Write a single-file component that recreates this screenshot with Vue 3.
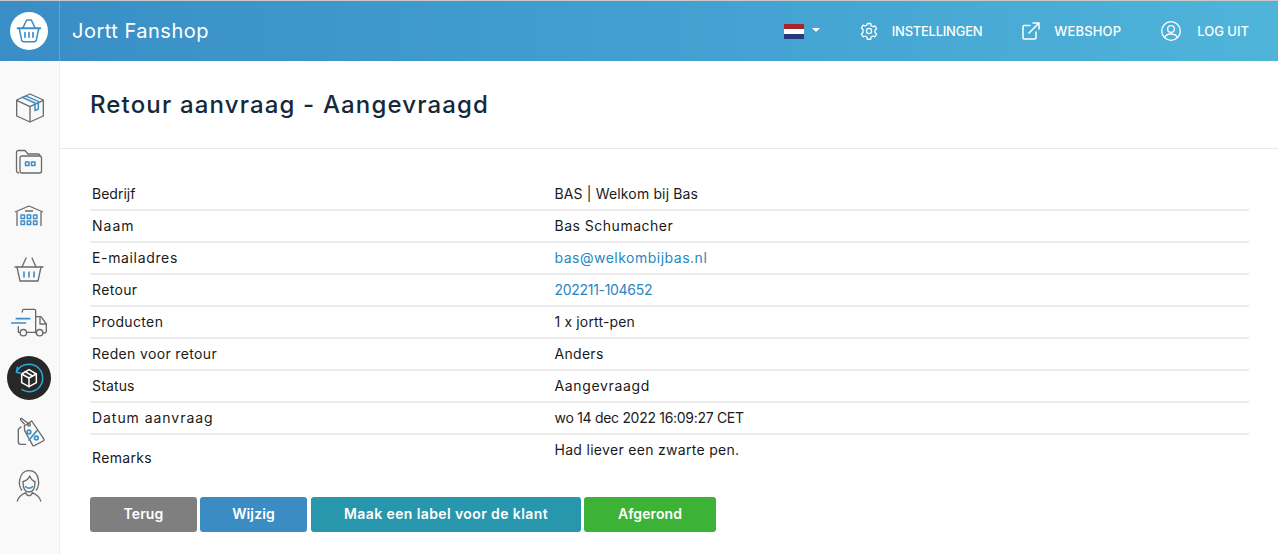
<script setup>
const rows = [
  { label: 'Bedrijf', value: 'BAS | Welkom bij Bas', lc: 'ls-1', vc: 'ls-2' },
  { label: 'Naam', value: 'Bas Schumacher', lc: 'ls-7', vc: 'ls-5' },
  { label: 'E-mailadres', value: 'bas@welkombijbas.nl', lc: 'ls-6', vc: 'ls-5', link: true },
  { label: 'Retour', value: '202211-104652', lc: 'ls-4', vc: 'ls-n', link: true },
  { label: 'Producten', value: '1 x jortt-pen', lc: 'ls-4', vc: 'ls-2' },
  { label: 'Reden voor retour', value: 'Anders', lc: 'ls-4', vc: 'ls-3' },
  { label: 'Status', value: 'Aangevraagd', lc: 'ls-2', vc: 'ls-6' },
  { label: 'Datum aanvraag', value: 'wo 14 dec 2022 16:09:27 CET', lc: 'ls-9', vc: 'ls-n' },
]
</script>

<template>
  <div class="page">
    <header class="topbar">
      <div class="logo-cell">
        <span class="logo">
          <svg width="38" height="38" viewBox="3 3 114 114" fill="none" stroke="#3a8fc6" stroke-width="4.500" stroke-linecap="round" stroke-linejoin="round">
            <path d="M41 52 53 27M79 52 67 27M53 27H67" />
            <path d="M26 52H94" stroke-width="6" />
            <path d="M31 54 38 87C39 91 41 92 44 92H76C79 92 81 91 82 87L89 54" />
            <path d="M48 65V79M60 65V79M72 65V79" stroke-width="5" />
          </svg>
        </span>
      </div>
      <div class="brand">Jortt Fanshop</div>
      <nav class="topnav">
        <div class="lang">
          <svg width="20" height="15" viewBox="0 0 20 15"><rect width="20" height="5" fill="#a8242f" /><rect y="5" width="20" height="5" fill="#fff" /><rect y="10" width="20" height="5" fill="#26387f" /></svg>
          <span class="caret"></span>
        </div>
        <a class="navitem settings">
          <svg width="18" height="18" viewBox="0 0 24 24" fill="none" stroke="#fff" stroke-width="1.700" stroke-linejoin="round"><circle cx="12" cy="12" r="3.400" /><path d="M9.800 2h4.400l.6 3 2.300 1.300 2.900-1 2.200 3.800-2.300 2V13.900l2.300 2-2.200 3.800-2.900-1-2.300 1.300-.6 3H9.800l-.6-3-2.300-1.300-2.900 1-2.200-3.800 2.300-2V10.100l-2.300-2 2.200-3.800 2.900 1 2.300-1.300z" /></svg>
          <span>INSTELLINGEN</span>
        </a>
        <a class="navitem webshop">
          <svg width="18" height="18" viewBox="0 0 18 18" fill="none" stroke="#fff" stroke-width="1.500" stroke-linecap="round" stroke-linejoin="round"><path d="M8 3.500H2.200c-.7 0-1.200.5-1.200 1.200v11.100c0 .7.5 1.200 1.200 1.200h10.600c.7 0 1.200-.5 1.200-1.200V10" /><path d="M7 11 17 1M11 1h6v6" /></svg>
          <span>WEBSHOP</span>
        </a>
        <a class="navitem logout">
          <svg width="20" height="20" viewBox="0 0 20 20" fill="none" stroke="#fff" stroke-width="1.300"><circle cx="10" cy="10" r="9.300" /><circle cx="10" cy="8" r="3.400" /><path d="M3.800 16.600C4.600 13.900 7 13 10 13s5.400.9 6.200 3.600" /></svg>
          <span>LOG UIT</span>
        </a>
      </nav>
    </header>

    <div class="body">
      <aside class="sidebar">
        <div class="side-item">
          <svg width="40" height="40" viewBox="0 0 120 120" fill="none" stroke="#6a6a6a" stroke-width="4" stroke-linejoin="round"><path d="M63 18 103 36V84L63 102 23 84V36z" /><path d="M23 37 63 56 103 37M63 56V102" /><path d="M38 27 78 45V68L88 63V40L48 23" stroke="#3a8fc6" stroke-width="4.500" /></svg>
        </div>
        <div class="side-item">
          <svg width="28" height="26" viewBox="0 0 28 26" fill="none" stroke="#6a6a6a" stroke-width="1.300" stroke-linejoin="round"><path d="M4 24C2.500 24 1.500 23 1.500 21.500V3.500C1.500 2.200 2.500 1.500 3.500 1.500H10L13 5H23c1 0 2 .7 2 2" /><rect x="5" y="7" width="21.500" height="17" rx="2" /><g stroke="#3a8fc6" stroke-width="1.500"><rect x="10.500" y="13" width="3.500" height="3.500" /><rect x="16.500" y="13" width="3.500" height="3.500" /></g></svg>
        </div>
        <div class="side-item">
          <svg width="30" height="22" viewBox="0 0 30 22" fill="none" stroke="#6a6a6a" stroke-width="1.300" stroke-linejoin="round"><path d="M1 7 15 1 29 7" /><path d="M3 7V21M27 7V21M11 6H19" /><g stroke="#3a8fc6" stroke-width="1.400"><rect x="7" y="10" width="3.500" height="3.500" /><rect x="13.200" y="10" width="3.500" height="3.500" /><rect x="19.500" y="10" width="3.500" height="3.500" /><rect x="7" y="16" width="3.500" height="3.500" /><rect x="13.200" y="16" width="3.500" height="3.500" /><rect x="19.500" y="16" width="3.500" height="3.500" /></g></svg>
        </div>
        <div class="side-item">
          <svg width="30" height="26" viewBox="0 0 30 26" fill="none" stroke="#6a6a6a" stroke-width="1.300" stroke-linecap="round" stroke-linejoin="round"><path d="M8 10 12 1M22 10 18 1" /><path d="M1 10H29" /><path d="M3 10 6 24H24L27 10" /><path d="M10 15V20M15 15V20M20 15V20" stroke="#3a8fc6" stroke-width="1.600" /></svg>
        </div>
        <div class="side-item">
          <svg width="40" height="40" viewBox="0 0 120 120" fill="none" stroke="#6a6a6a" stroke-width="4" stroke-linecap="round" stroke-linejoin="round"><path d="M40 24V21C40 18 42 16 45 16H76C79 16 80 18 80 21V85H54M32 85H28V68" /><path d="M80 38H96L112 60V82C112 85 110 87 107 87H102M82 87H80" /><path d="M93 41V60H111" /><circle cx="43" cy="86" r="9.500" /><circle cx="92" cy="86" r="9.500" /><path d="M22 44H62M8 57H50" stroke="#3a8fc6" stroke-width="5" /></svg>
        </div>
        <div class="side-item">
          <span class="active-circle">
            <svg width="44" height="44" viewBox="6 6 132 132" fill="none" stroke-linejoin="round" stroke-linecap="round"><g stroke="#fff" stroke-width="4.500"><path d="M72 47 94 60V86L72 98 50 86V60z" /><path d="M50 60 72 72 94 60M72 72V98M60 53 83 66" /></g><path d="M35 53C42 39 56 31 72 31 95 31 113 49 113 72S95 113 72 113C65 113 58 111 51 107" stroke="#2aa9e0" stroke-width="4.500" /><path d="M37 40 34 55 49 58" stroke="#2aa9e0" stroke-width="4.500" /></svg>
          </span>
        </div>
        <div class="side-item">
          <svg width="40" height="40" viewBox="0 0 120 120" fill="none" stroke="#6a6a6a" stroke-width="4" stroke-linecap="round" stroke-linejoin="round"><path d="M36 45 28 52V90C28 95 30 97 35 97H50" /><path d="M46 42 68 27 104 80C106 83 105 85 102 87L76 101C73 102 71 101 70 98L47 56z" /><circle cx="60" cy="38" r="4" /><path d="M60 36 39 20C34 17 33 22 36 25L46 36" /><g stroke="#3a8fc6" stroke-width="5"><path d="M84 56 60 84" /><circle cx="60" cy="60" r="5.500" /><circle cx="82" cy="78" r="5.500" /></g></svg>
        </div>
        <div class="side-item">
          <svg width="40" height="40" viewBox="0 0 120 120" fill="none" stroke="#6a6a6a" stroke-width="4" stroke-linecap="round" stroke-linejoin="round"><path d="M38 72C31 62 30 52 32 42 35 22 48 14 60 14 75 14 86 24 88 42 90 52 89 62 82 72" /><path d="M42 47C52 44 60 36 62 30 66 39 72 45 78 47" /><path d="M42 47C42 68 50 78 60 78 71 78 78 68 78 47" /><path d="M25 105C27 92 38 86 50 80 54 92 66 92 70 80 82 86 93 92 95 105" /><path d="M50 62C55 68 65 68 70 62" stroke="#3a8fc6" stroke-width="5" /></svg>
        </div>
      </aside>

      <main class="content">
        <div class="title-band"><h1>Retour aanvraag - Aangevraagd</h1></div>
        <section class="panel">
          <div v-for="row in rows" :key="row.label" class="row">
            <div class="cell" :class="row.lc">{{ row.label }}</div>
            <div class="cell" :class="row.vc">
              <a v-if="row.link" class="link">{{ row.value }}</a>
              <template v-else>{{ row.value }}</template>
            </div>
          </div>
          <div class="row remarks">
            <div class="cell remarks-label ls-4">Remarks</div>
            <div class="cell remarks-value ls-3">Had liever een zwarte pen.</div>
          </div>
          <div class="actions">
            <button class="btn grey">Terug</button>
            <button class="btn blue">Wijzig</button>
            <button class="btn teal">Maak een label voor de klant</button>
            <button class="btn green">Afgerond</button>
          </div>
        </section>
      </main>
    </div>
  </div>
</template>

<style>
html, body { margin: 0; background: #fff; }
</style>

<style scoped>
.page {
  min-height: 554px;
  display: flex;
  flex-direction: column;
  font-family: "Inter", "Noto Sans", sans-serif;
  color: #1a1a1a;
  border-top: 1px solid #c9c9c9;
  box-sizing: border-box;
}
.topbar {
  height: 60px;
  display: flex;
  align-items: center;
  color: #fff;
  background: linear-gradient(90deg, #398ec5 0%, #44a3d2 60%, #4fb4da 100%);
}
.logo-cell {
  width: 58px;
  padding-right: 1px;
  height: 100%;
  border-right: 1px solid #5ba6d4;
  display: flex;
  align-items: center;
  justify-content: center;
}
.logo {
  width: 38px;
  height: 38px;
  border-radius: 50%;
  background: #fff;
  display: flex;
}
.brand {
  margin-left: 12px;
  font-size: 20px;
  letter-spacing: 0.5px;
  font-weight: 400;
}
.topnav {
  margin-left: auto;
  display: flex;
  align-items: center;
  padding-right: 29px;
}
.lang {
  display: flex;
  align-items: center;
  gap: 8px;
  margin-right: 40px;
}
.caret {
  width: 0;
  height: 0;
  border-left: 4px solid transparent;
  border-right: 4px solid transparent;
  border-top: 4px solid #fff;
  margin-top: -3px;
}
.navitem {
  display: flex;
  align-items: center;
  gap: 14px;
  font-size: 13px;
  font-weight: 500;
  margin-right: 40px;
}
.settings span { letter-spacing: -0.25px; }
.webshop span { letter-spacing: 0.15px; }
.logout { gap: 16px; margin-right: 0; }
.body { flex: 1; display: flex; }
.sidebar {
  width: 59px;
  border-right: 1px solid #ececec;
  background: #f9f9f9;
  padding-top: 20px;
  flex-shrink: 0;
}
.side-item {
  height: 54px;
  padding-right: 1px;
  display: flex;
  align-items: center;
  justify-content: center;
}
.active-circle {
  width: 44px;
  height: 44px;
  border-radius: 50%;
  background: #272727;
  display: flex;
}
.content { flex: 1; min-width: 0; }
.title-band {
  height: 88px;
  box-sizing: border-box;
  border-bottom: 1px solid #e9e9e9;
  padding: 0 30px;
  display: flex;
  align-items: center;
}
h1 {
  margin: 0;
  font-size: 24px;
  font-weight: 500;
  color: #16293a;
  letter-spacing: 1.15px;
}
.panel { padding: 30px 29px 0 30px; }
.row {
  display: grid;
  grid-template-columns: 462.5px 1fr;
  height: 32px;
  box-sizing: border-box;
  border-bottom: 2px solid #ececec;
  font-size: 14px;
  line-height: 30px;
}
.cell { padding-left: 2px; white-space: nowrap; }
.ls-n { letter-spacing: -0.3px; }
.ls-1 { letter-spacing: 0; }
.ls-2 { letter-spacing: 0.15px; }
.ls-3 { letter-spacing: 0.3px; }
.ls-4 { letter-spacing: 0.35px; }
.ls-5 { letter-spacing: 0.5px; }
.ls-6 { letter-spacing: 0.65px; }
.ls-7 { letter-spacing: 1px; }
.ls-9 { letter-spacing: 0.95px; }
.link { color: #2b87c0; }
.row.remarks { height: 46px; border-bottom: 0; }
.remarks-label { line-height: 46px; }
.remarks-value { line-height: 30px; }
.actions { display: flex; gap: 3px; margin-top: 16px; }
.btn {
  height: 35px;
  border: 0;
  border-radius: 3px;
  color: #fff;
  font-family: inherit;
  font-size: 14px;
  font-weight: 600;
  padding: 0 0 2px;
  letter-spacing: 0.1px;
}
.grey { width: 107px; background: #7f7f7f; }
.blue { width: 107px; background: #3a8cc3; margin-right: 1px; }
.teal { width: 270px; background: #2897ad; letter-spacing: 0.4px; }
.green { width: 132px; background: #3cb336; }
</style>
